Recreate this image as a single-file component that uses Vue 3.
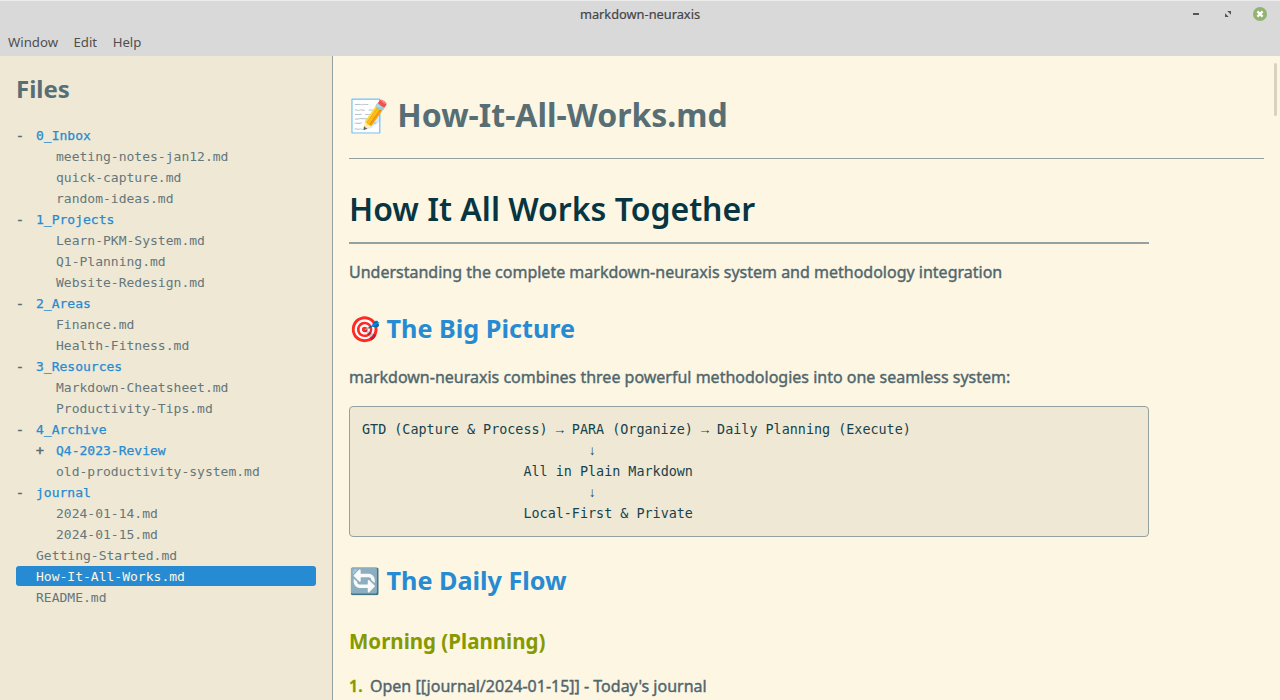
<script setup>
const dir = (name, depth = 0, open = true) => ({ name, depth, toggle: open ? '-' : '+' })
const file = (name, depth = 1) => ({ name, depth, toggle: '' })

const tree = [
  dir('0_Inbox'),
  file('meeting-notes-jan12.md'),
  file('quick-capture.md'),
  file('random-ideas.md'),
  dir('1_Projects'),
  file('Learn-PKM-System.md'),
  file('Q1-Planning.md'),
  file('Website-Redesign.md'),
  dir('2_Areas'),
  file('Finance.md'),
  file('Health-Fitness.md'),
  dir('3_Resources'),
  file('Markdown-Cheatsheet.md'),
  file('Productivity-Tips.md'),
  dir('4_Archive'),
  dir('Q4-2023-Review', 1, false),
  file('old-productivity-system.md'),
  dir('journal'),
  file('2024-01-14.md'),
  file('2024-01-15.md'),
  file('Getting-Started.md', 0),
  file('How-It-All-Works.md', 0),
  file('README.md', 0),
]
const selected = 'How-It-All-Works.md'

const diagram = [
  'GTD (Capture & Process) → PARA (Organize) → Daily Planning (Execute)',
  ' '.repeat(28) + '↓',
  ' '.repeat(20) + 'All in Plain Markdown',
  ' '.repeat(28) + '↓',
  ' '.repeat(20) + 'Local-First & Private',
].map((line) => line.split(/([→↓])/))
</script>

<template>
  <div class="window">
    <header class="titlebar">
      <span class="title">markdown-neuraxis</span>
      <div class="controls">
        <svg width="14" height="14" viewBox="0 0 14 14"><path d="M4 7h6" stroke="#555" stroke-width="2" /></svg>
        <svg width="14" height="14" viewBox="0 0 14 14"><path d="M6.2 4H10v3.8zM4 6.2V10h3.8z" fill="#555" /></svg>
        <svg width="14" height="14" viewBox="0 0 14 14">
          <circle cx="7" cy="7" r="7" fill="#92b372" />
          <path d="M4.4 4.4l5.2 5.2M9.6 4.4L4.4 9.6" stroke="#fff" stroke-width="2.2" />
        </svg>
      </div>
    </header>
    <nav class="menubar"><span>Window</span><span>Edit</span><span>Help</span></nav>
    <div class="body">
      <aside class="sidebar">
        <h2>Files</h2>
        <div
          v-for="item in tree"
          :key="item.name"
          class="row"
          :class="{ dir: item.toggle, nested: item.depth, selected: item.name === selected }"
        >
          <span class="toggle">{{ item.toggle }}</span><span class="name">{{ item.name }}</span>
        </div>
      </aside>
      <main class="content">
        <div class="doc-title">📝 How-It-All-Works.md</div>
        <article>
          <h1>How It All Works Together</h1>
          <p>Understanding the complete markdown-neuraxis system and methodology integration</p>
          <h2>🎯 The Big Picture</h2>
          <p>markdown-neuraxis combines three powerful methodologies into one seamless system:</p>
          <div class="code">
            <div v-for="(line, n) in diagram" :key="n" class="line"><span v-for="(part, k) in line" :key="k" :class="{ arrow: k % 2 }">{{ part }}</span></div>
          </div>
          <h2>🔄 The Daily Flow</h2>
          <h3>Morning (Planning)</h3>
          <div class="item"><span class="num">1.</span><span>Open [[journal/2024-01-15]] - Today's journal</span></div>
        </article>
        <div class="scrollbar"></div>
      </main>
    </div>
  </div>
</template>

<style>
body { margin: 0; overflow: hidden; }
</style>

<style scoped>
.window {
  width: 1280px;
  height: 700px;
  display: flex;
  flex-direction: column;
  overflow: hidden;
  background: #fdf6e3;
  color: #586e75;
  font-family: "Noto Sans", sans-serif;
}
h1, h2, h3, p { margin: 0; }
.titlebar {
  box-sizing: border-box;
  flex: none;
  height: 28px;
  border-top: 1px solid #ececec;
  background: #d9d9d9;
  display: grid;
  grid-template-columns: 1fr auto 1fr;
  align-items: center;
  padding: 0 13px;
  color: #454545;
}
.title { grid-column: 2; padding-bottom: 2px; font-size: 12.8px; line-height: 24px; -webkit-text-stroke: 0.2px; }
.controls { display: flex; gap: 18px; justify-content: flex-end; padding-bottom: 1px; }
.controls svg { display: block; }
.menubar {
  flex: none;
  height: 28px;
  background: #d9d9d9;
  display: flex;
  gap: 15.5px;
  padding-left: 8px;
  font-size: 13.2px;
  line-height: 28px;
  color: #4f4f4f;
}
.body { flex: 1; min-height: 0; display: flex; }
.sidebar {
  box-sizing: border-box;
  flex: none;
  width: 333px;
  padding: 16px 16px 0;
  border-right: 1px solid #93a1a1;
  background: #eee8d5;
}
.sidebar h2 { font-size: 24px; font-weight: 700; line-height: 34px; margin-bottom: 19px; }
.row {
  display: flex;
  height: 20px;
  margin-bottom: 1px;
  border-radius: 3px;
  font: 13.03px/21px "DejaVu Sans Mono", monospace;
  color: #66777b;
  white-space: pre;
}
.row.nested { padding-left: 20px; }
.toggle { width: 20px; flex: none; color: #586e75; -webkit-text-stroke: 0.5px; }
.dir .name { color: #268bd2; -webkit-text-stroke: 0.25px; }
.selected { background: #268bd2; color: #fdf6e3; }
.content { position: relative; flex: 1; padding: 37px 16px 0; }
.doc-title {
  height: 65px;
  border-bottom: 1px solid #93a1a1;
  font-size: 32px;
  font-weight: 700;
  line-height: 44px;
  white-space: pre;
}
article { width: 800px; padding-top: 28px; }
h1 {
  height: 55px;
  border-bottom: 2px solid #93a1a1;
  font-size: 32px;
  font-weight: 600;
  line-height: 44px;
  color: #073642;
  margin-bottom: 15px;
}
p { font-size: 16px; line-height: 26px; white-space: nowrap; color: #50666d; -webkit-text-stroke: 0.4px; }
article h2 {
  height: 36px;
  margin: 25px 0 18px;
  font-size: 25.2px;
  font-weight: 700;
  line-height: 36px;
  color: #268bd2;
}
.code {
  margin-top: 16px;
  padding: 12px;
  border: 1px solid #93a1a1;
  border-radius: 4px;
  background: #eee8d5;
  color: #17424c;
  font: 13.42px/21px "DejaVu Sans Mono", monospace;
}
.line { height: 21px; white-space: pre; }
.arrow { font-family: "Liberation Mono", monospace; }
h3 { margin-top: 28px; font-size: 20.5px; font-weight: 700; line-height: 30px; color: #859900; }
.item { display: flex; margin-top: 17px; font-size: 16px; line-height: 26px; color: #50666d; -webkit-text-stroke: 0.4px; }
.num { width: 21px; font-weight: 600; color: #859900; }
.scrollbar {
  position: absolute;
  top: 7px;
  right: 3px;
  width: 3px;
  height: 53px;
  border-radius: 2px;
  background: #d9d2c0;
}
</style>
